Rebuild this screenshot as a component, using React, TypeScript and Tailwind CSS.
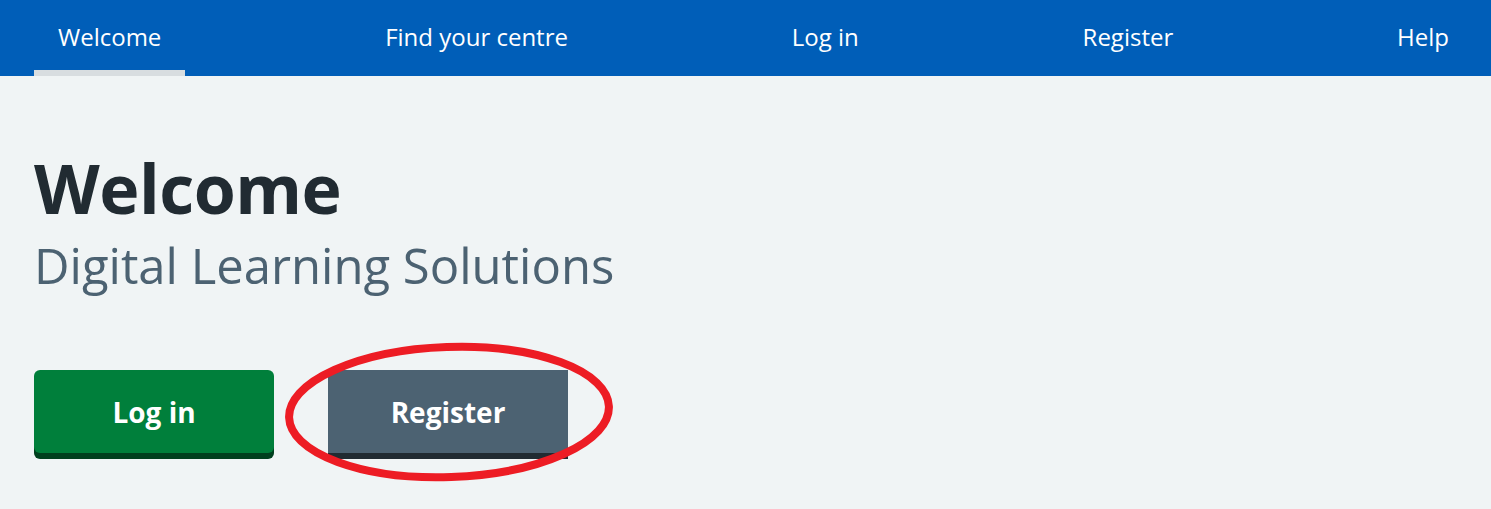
const navItems = ['Welcome', 'Find your centre', 'Log in', 'Register', 'Help'];

export default function App() {
  return (
    <div className="min-h-[509px] bg-[#f0f4f5] font-['Open_Sans',sans-serif] text-[#212b32]">
      <nav className="bg-[#005eb8]">
        <ul className="flex h-[76px] justify-between pl-[34px] pr-[18px]">
          {navItems.map((item, i) => (
            <li
              key={item}
              className={
                'flex items-center border-b-[6px] px-[24px] pt-[3px] text-[24px] text-white ' +
                (i === 0 ? 'border-[#d8dde0]' : 'border-transparent')
              }
            >
              {item}
            </li>
          ))}
        </ul>
      </nav>

      <main className="px-[34px] pt-[70px]">
        <h1 className="text-[68px] font-bold leading-[84px] tracking-[-0.5px]">Welcome</h1>
        <p className="mt-[4px] text-[49px] leading-[62px] text-[#4c6272]">Digital Learning Solutions</p>

        <div className="mt-[74px] flex gap-[54px]">
          <button className="h-[83px] w-[240px] rounded-[6px] bg-[#007f3b] text-[28px] font-bold text-white shadow-[0_6px_0_#00401e]">
            Log in
          </button>
          <div className="relative">
            <button className="h-[83px] w-[240px] bg-[#4c6272] text-[28px] font-bold text-white shadow-[0_6px_0_#212b32]">
              Register
            </button>
            <svg
              className="pointer-events-none absolute left-[-45px] top-[-30px]"
              width="332"
              height="144"
              viewBox="0 0 332 144"
            >
              <ellipse
                cx="166"
                cy="72"
                rx="160"
                ry="65"
                fill="none"
                stroke="#ed1c24"
                strokeWidth="8"
                transform="rotate(-2 166 72)"
              />
            </svg>
          </div>
        </div>
      </main>
    </div>
  );
}
